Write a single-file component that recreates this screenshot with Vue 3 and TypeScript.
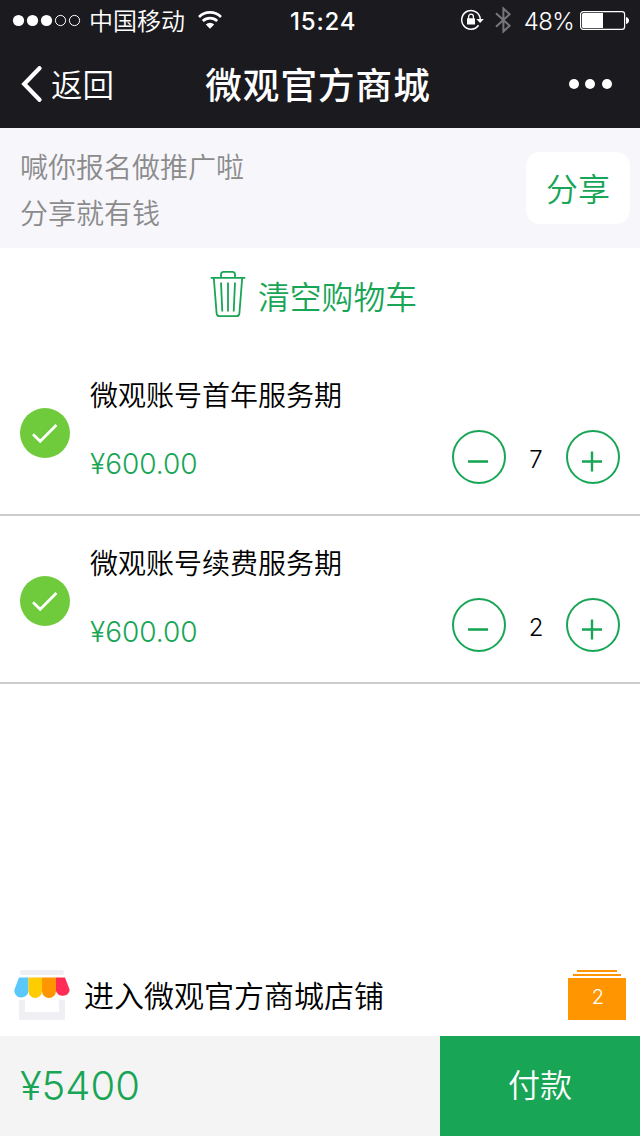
<script setup lang="ts">
import { computed, ref } from 'vue'

interface CartItem {
  id: number
  name: string
  price: string
  count: number
}

const items = ref<CartItem[]>([
  { id: 1, name: '微观账号首年服务期', price: '600.00', count: 7 },
  { id: 2, name: '微观账号续费服务期', price: '600.00', count: 2 },
])

const total = computed(() => items.value.reduce((sum, i) => sum + Number(i.price) * i.count, 0))

function change(item: CartItem, step: number) {
  item.count = Math.max(0, item.count + step)
}
</script>

<template>
  <div class="screen">
    <header class="top">
      <div class="status">
        <svg class="signal" width="70" height="14" viewBox="0 0 70 14">
          <g fill="#fff">
            <circle cx="6.5" cy="7.5" r="5.6" />
            <circle cx="20.5" cy="7.5" r="5.6" />
            <circle cx="34.5" cy="7.5" r="5.6" />
          </g>
          <g fill="none" stroke="#fff" stroke-width="1">
            <circle cx="48.5" cy="7.5" r="5.1" />
            <circle cx="62.5" cy="7.5" r="5.1" />
          </g>
        </svg>
        <span class="carrier">中国移动</span>
        <svg class="wifi" width="26" height="20" viewBox="0 0 26 20">
          <g fill="none" stroke="#fff" stroke-width="2.7">
            <path d="M2 7A15.6 15.6 0 0 1 24 7" />
            <path d="M5.8 11A10.3 10.3 0 0 1 20.2 11" />
          </g>
          <path d="M8.8 14.4A6.1 6.1 0 0 1 17.2 14.4L13 18.8Z" fill="#fff" />
        </svg>
        <span class="clock">15:24</span>
        <div class="status-right">
          <svg class="lock" width="24" height="22" viewBox="0 0 24 22">
            <path d="M18.6 16.2A9.3 9.3 0 1 1 20.3 10.5" fill="none" stroke="#fff" stroke-width="1.5" />
            <path d="M16.4 10H23.8L20.1 14Z" fill="#fff" />
            <rect x="7" y="9.3" width="8" height="6.3" rx=".6" fill="#fff" />
            <path d="M8.6 9.8V7.6a2.4 2.4 0 0 1 4.8 0V9.8" fill="none" stroke="#fff" stroke-width="1.3" />
          </svg>
          <svg class="bluetooth" width="17" height="28" viewBox="0 0 17 28">
            <path d="M1 7.2L14.6 19.8L8.4 25.4V2.6L14.6 8.2L1 20.8" fill="none" stroke="#77777a" stroke-width="2" />
          </svg>
          <span class="percent">48%</span>
          <svg class="battery" width="49" height="20" viewBox="0 0 49 20">
            <rect x=".6" y="1.6" width="44" height="17.8" rx="2.6" fill="none" stroke="#fff" stroke-width="1.2" />
            <path d="M3.5 3H23V18H3.5Q2 18 2 16.5V4.5Q2 3 3.5 3Z" fill="#fff" />
            <path d="M46 7Q49 8 49 10.5T46 14Z" fill="#fff" />
          </svg>
        </div>
      </div>
      <nav class="nav">
        <button class="back">
          <svg width="22" height="36" viewBox="0 0 22 36">
            <path d="M19.5 2.2L4.2 18L19.5 33.8" fill="none" stroke="#fff" stroke-width="4.2" stroke-linecap="round" stroke-linejoin="miter" />
          </svg>
          <span>返回</span>
        </button>
        <h1 class="title">微观官方商城</h1>
        <svg class="more" width="44" height="12" viewBox="0 0 44 12" fill="#fff">
          <circle cx="6" cy="6" r="5" />
          <circle cx="22" cy="6" r="5" />
          <circle cx="39" cy="6" r="5" />
        </svg>
      </nav>
    </header>

    <section class="promo">
      <p class="promo-text">喊你报名做推广啦<br />分享就有钱</p>
      <button class="share">分享</button>
    </section>

    <button class="clear">
      <svg width="36" height="48" viewBox="0 0 36 48" fill="none" stroke="#18a556" stroke-width="1.8">
        <path d="M.7 7.8H35.3" />
        <path d="M11 7.6V4.4Q11 1.8 13.6 1.8H22.4Q25 1.8 25 4.4V7.6" />
        <path d="M3.8 8L6.6 43.4Q6.9 46.2 9.7 46.2H26.3Q29.1 46.2 29.4 43.4L32.2 8" />
        <path d="M11 12.5L12.3 41.5M18 12.5V41.5M25 12.5L23.7 41.5" />
      </svg>
      <span>清空购物车</span>
    </button>

    <main class="list">
      <article v-for="item in items" :key="item.id" class="item">
        <svg class="check" width="50" height="50" viewBox="0 0 50 50">
          <circle cx="25" cy="25" r="25" fill="#6fca3c" />
          <path d="M13 26.3L20.2 33.3L36.4 17" fill="none" stroke="#fff" stroke-width="2.7" />
        </svg>
        <div class="info">
          <h2 class="name">{{ item.name }}</h2>
          <span class="price">¥{{ item.price }}</span>
        </div>
        <div class="stepper">
          <button class="round" @click="change(item, -1)">
            <svg width="54" height="54" viewBox="0 0 54 54" fill="none" stroke="#18a556" stroke-width="2">
              <circle cx="27" cy="27" r="26" />
              <path d="M16 31.5H36" stroke-width="2.6" />
            </svg>
          </button>
          <span class="count">{{ item.count }}</span>
          <button class="round" @click="change(item, 1)">
            <svg width="54" height="54" viewBox="0 0 54 54" fill="none" stroke="#18a556" stroke-width="2">
              <circle cx="27" cy="27" r="26" />
              <path d="M16 31.5H36M26 21.5V41.5" stroke-width="2.4" />
            </svg>
          </button>
        </div>
      </article>
    </main>

    <section class="shop">
      <svg width="56" height="50" viewBox="0 0 56 50">
        <rect x="6" y="0" width="44" height="5" rx="2.5" fill="#efeff4" />
        <path d="M5 30H11V42H45V30H51V47.5Q51 50 48.5 50H7.5Q5 50 5 47.5Z" fill="#efeff4" />
        <path d="M5 7.5H14.5V21A7.1 7.1 0 0 1 .3 20Z" fill="#5ac8fa" />
        <path d="M14.5 7.5H28V21A6.75 7 0 0 1 14.5 21Z" fill="#ffcc00" />
        <path d="M28 7.5H42V21A7 7 0 0 1 28 21Z" fill="#ff9500" />
        <path d="M42 7.5H51L55.7 20A7.1 7.1 0 0 1 42 21Z" fill="#ff2d55" />
      </svg>
      <span class="shop-name">进入微观官方商城店铺</span>
      <div class="orders">
        <i class="sheet small"></i>
        <i class="sheet"></i>
        <b class="orders-count">{{ items.length }}</b>
      </div>
    </section>

    <footer class="pay-bar">
      <span class="total">¥{{ total }}</span>
      <button class="pay">付款</button>
    </footer>
  </div>
</template>

<style>
body {
  margin: 0;
  background: #fff;
}
</style>

<style scoped>
.screen {
  display: flex;
  flex-direction: column;
  width: 640px;
  height: 1136px;
  overflow: hidden;
  background: #fff;
  color: #000;
  font-family: Inter, "Noto Sans CJK SC", sans-serif;
  font-weight: 350;
}
button {
  padding: 0;
  border: 0;
  background: none;
  font: inherit;
  color: inherit;
}
h1, h2, p {
  margin: 0;
}
svg {
  display: block;
  flex: none;
}
.top {
  height: 128px;
  background: #1b1a1f;
  color: #fff;
}
.status {
  display: grid;
  grid-template-columns: auto auto auto 1fr auto;
  align-items: center;
  height: 40px;
  padding: 0 11px 0 12px;
  font-size: 24px;
  line-height: 40px;
}
.carrier {
  margin-left: 7px;
  padding-top: 3px;
  line-height: 37px;
}
.wifi {
  margin-left: 12px;
}
.clock {
  padding: 3px 0 0 67px;
  line-height: 37px;
  font-weight: 500;
  letter-spacing: 0.8px;
}
.status-right {
  display: flex;
  align-items: center;
}
.bluetooth {
  margin-left: 11px;
}
.percent {
  margin: 3px 6px 0 12px;
  line-height: 37px;
  font-weight: 350;
  letter-spacing: -0.7px;
}
.nav {
  display: grid;
  grid-template-columns: 1fr auto 1fr;
  align-items: center;
  height: 88px;
  padding: 0 28px 0 20px;
}
.back {
  display: flex;
  align-items: center;
  gap: 9px;
  font-size: 31.5px;
  line-height: 84px;
}
.back span {
  padding-top: 4px;
}
.title {
  padding: 3px 0 0 4px;
  font-size: 36.6px;
  font-weight: 500;
  letter-spacing: 1px;
  line-height: 82px;
}
.more {
  justify-self: end;
}
.promo {
  display: flex;
  justify-content: space-between;
  align-items: center;
  height: 120px;
  padding: 0 10px 0 20px;
  background: #f6f6fb;
}
.promo-text {
  padding-top: 5px;
  color: #8b8b8b;
  font-size: 28px;
  line-height: 46px;
}
.share {
  width: 104px;
  height: 72px;
  padding-bottom: 2px;
  border-radius: 14px;
  background: #fff;
  color: #18a556;
  font-size: 32px;
}
.clear {
  display: flex;
  justify-content: center;
  align-items: center;
  gap: 12px;
  height: 100px;
  padding: 0 13px 8px 0;
  box-sizing: border-box;
  color: #18a556;
  font-size: 31.8px;
}
.clear span {
  padding-top: 1px;
}
.list {
  flex: 1;
}
.item {
  display: flex;
  height: 168px;
  padding: 0 20px;
  box-sizing: border-box;
  border-bottom: 2px solid #ccc;
}
.check {
  margin-top: 60px;
}
.info {
  display: flex;
  flex: 1;
  flex-direction: column;
  margin-left: 20px;
}
.name {
  margin-top: 28px;
  font-size: 28px;
  font-weight: 350;
  line-height: 40px;
}
.price {
  margin-top: 28px;
  color: #18a556;
  font-size: 28px;
  line-height: 40px;
}
.stepper {
  display: flex;
  align-items: center;
  height: 54px;
  margin-top: 82px;
}
.count {
  width: 60px;
  font-size: 24px;
  text-align: center;
  padding-top: 4px;
}
.shop {
  display: flex;
  align-items: center;
  height: 82px;
  padding: 0 14px;
}
.shop-name {
  flex: 1;
  margin-left: 14px;
  padding-top: 2px;
  font-size: 30px;
  line-height: 44px;
}
.orders {
  display: flex;
  flex-direction: column;
  align-items: center;
  gap: 2px;
  width: 58px;
  height: 50px;
}
.sheet {
  width: 48px;
  height: 2px;
  background: #ff9500;
}
.sheet.small {
  width: 40px;
}
.orders-count {
  width: 58px;
  height: 42px;
  background: #ff9500;
  color: #fff;
  font-size: 20px;
  font-weight: 350;
  line-height: 38px;
  text-indent: 2px;
  text-align: center;
}
.pay-bar {
  display: flex;
  height: 100px;
  background: #f4f4f4;
  line-height: 100px;
}
.total {
  flex: 1;
  padding-left: 20px;
  color: #18a556;
  font-size: 40px;
}
.pay {
  width: 200px;
  background: #18a556;
  color: #fff;
  font-size: 32px;
}
</style>
